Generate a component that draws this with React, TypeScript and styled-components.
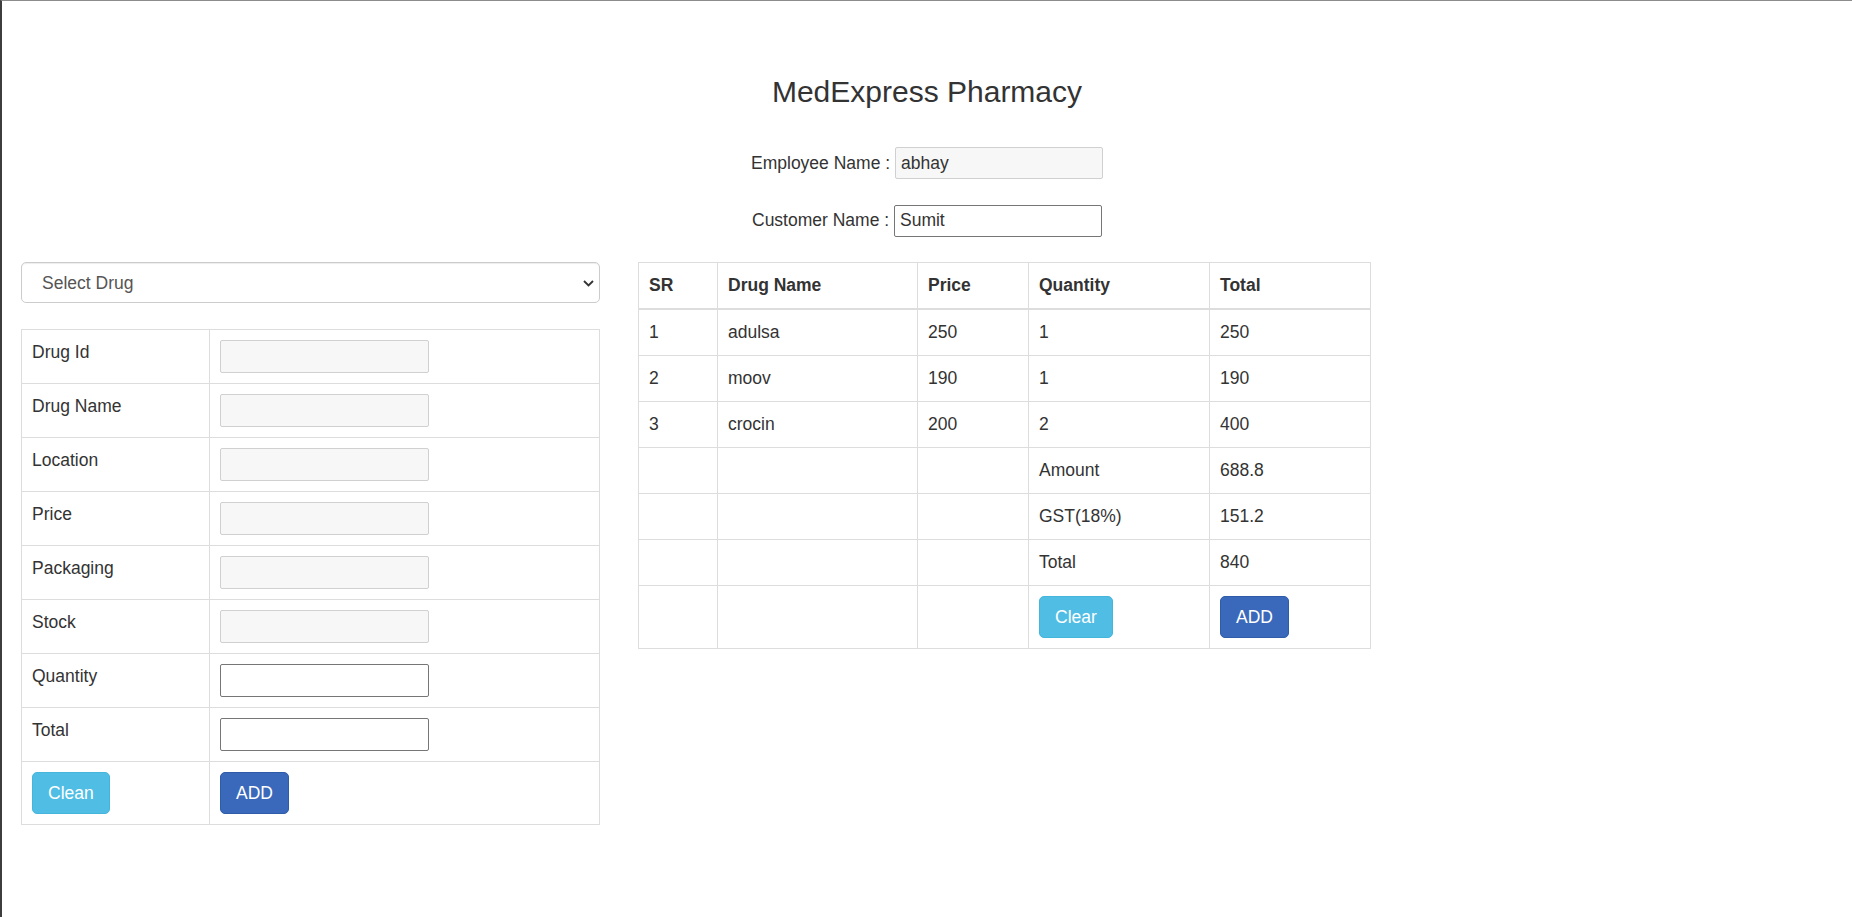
import * as React from "react";
import styled, { createGlobalStyle, css } from "styled-components";

const GlobalStyle = createGlobalStyle`
  html, body {
    margin: 0;
    padding: 0;
    background: #fff;
  }
  body {
    font-family: "Liberation Sans", Arial, Helvetica, sans-serif;
    font-size: 17.5px;
    line-height: 25px;
    color: #333;
  }
  * {
    box-sizing: border-box;
  }
`;

interface DrugField {
  label: string;
  readOnly: boolean;
}

interface CartItem {
  sr: number;
  name: string;
  price: number;
  qty: number;
}

const DRUG_FIELDS: DrugField[] = [
  { label: "Drug Id", readOnly: true },
  { label: "Drug Name", readOnly: true },
  { label: "Location", readOnly: true },
  { label: "Price", readOnly: true },
  { label: "Packaging", readOnly: true },
  { label: "Stock", readOnly: true },
  { label: "Quantity", readOnly: false },
  { label: "Total", readOnly: false },
];

const CART: CartItem[] = [
  { sr: 1, name: "adulsa", price: 250, qty: 1 },
  { sr: 2, name: "moov", price: 190, qty: 1 },
  { sr: 3, name: "crocin", price: 200, qty: 2 },
];

const SUMMARY = [
  { label: "Amount", value: "688.8" },
  { label: "GST(18%)", value: "151.2" },
  { label: "Total", value: "840" },
];

const CART_COLUMNS = [
  { title: "SR", width: 79 },
  { title: "Drug Name", width: 200 },
  { title: "Price", width: 111 },
  { title: "Quantity", width: 181 },
  { title: "Total", width: 161 },
];

const Frame = styled.div`
  min-height: 100vh;
  border-top: 1px solid #8c8c8c;
  border-left: 2px solid #3d3d3d;
  padding: 74px 19px 40px 19px;
`;

const Header = styled.header`
  display: flex;
  flex-direction: column;
  align-items: center;
`;

const Title = styled.h1`
  margin: 0 0 39px;
  font-size: 30px;
  line-height: 33px;
  font-weight: 500;
  color: #333;
`;

const FieldRow = styled.div`
  display: flex;
  align-items: center;
  height: 32px;
  margin-bottom: 25.5px;
  white-space: pre;
`;

const inputBase = css`
  height: 33px;
  padding: 0 5px;
  font-family: inherit;
  font-size: 17.5px;
  color: #333;
  border-radius: 2px;
  outline: none;
`;

const TextInput = styled.input<{ $locked?: boolean; $w?: number }>`
  ${inputBase}
  width: ${(p) => p.$w ?? 209}px;
  background: ${(p) => (p.$locked ? "#f7f7f7" : "#fff")};
  border: 1px solid ${(p) => (p.$locked ? "#d0d0d0" : "#767676")};
`;

const HeaderInput = styled(TextInput)`
  height: 32px;
`;

const Main = styled.main`
  display: flex;
  align-items: flex-start;
  gap: 38px;
`;

const LeftColumn = styled.section`
  width: 579px;
  flex: none;
`;

const SelectWrap = styled.div`
  position: relative;
  margin-bottom: 26px;
`;

const DrugSelect = styled.select`
  appearance: none;
  display: block;
  width: 100%;
  height: 41px;
  padding: 0 30px 0 20px;
  font-family: inherit;
  font-size: 17.5px;
  color: #555;
  background: #fff;
  border: 1px solid #ccc;
  border-radius: 5px;
  box-shadow: inset 0 1px 1px rgba(0, 0, 0, 0.075);
  outline: none;
`;

const Chevron = styled.svg`
  position: absolute;
  right: 6px;
  top: 18px;
  pointer-events: none;
`;

const Table = styled.table<{ $w?: number }>`
  width: ${(p) => (p.$w ? `${p.$w}px` : "100%")};
  border-collapse: collapse;
  table-layout: fixed;
  border: 1px solid #ddd;
  flex: none;
`;

const Th = styled.th<{ $w: number }>`
  width: ${(p) => p.$w}px;
  padding: 10px;
  text-align: left;
  vertical-align: bottom;
  font-weight: bold;
  border: 1px solid #ddd;
  border-bottom: 2px solid #ddd;
`;

const Td = styled.td<{ $w?: number }>`
  ${(p) => p.$w && `width: ${p.$w}px;`}
  padding: 10px;
  vertical-align: top;
  border: 1px solid #ddd;
  height: 25px;
`;

const Button = styled.button<{ $variant: "info" | "primary" }>`
  display: inline-block;
  padding: 7.5px 15px;
  font-family: inherit;
  font-size: 17.5px;
  line-height: 25px;
  color: #fff;
  border-radius: 5px;
  cursor: pointer;
  background: ${(p) => (p.$variant === "info" ? "#50bde4" : "#3a69bc")};
  border: 1px solid ${(p) => (p.$variant === "info" ? "#46b5dc" : "#2f5ca8")};
`;

const App: React.FC = () => {
  return (
    <>
      <GlobalStyle />
      <Frame>
        <Header>
          <Title>MedExpress Pharmacy</Title>
          <FieldRow>
            {"Employee Name : "}
            <HeaderInput $locked $w={208} value="abhay" readOnly />
          </FieldRow>
          <FieldRow>
            {"Customer Name : "}
            <HeaderInput $w={208} defaultValue="Sumit" />
          </FieldRow>
        </Header>

        <Main>
          <LeftColumn>
            <SelectWrap>
              <DrugSelect defaultValue="">
                <option value="">Select Drug</option>
                <option value="adulsa">adulsa</option>
                <option value="moov">moov</option>
                <option value="crocin">crocin</option>
              </DrugSelect>
              <Chevron width="11" height="7" viewBox="0 0 11 7">
                <polyline points="1,1 5.5,5.5 10,1" fill="none" stroke="#333" strokeWidth="1.8" />
              </Chevron>
            </SelectWrap>

            <Table>
              <tbody>
                {DRUG_FIELDS.map((f, i) => (
                  <tr key={f.label}>
                    <Td $w={i === 0 ? 188 : undefined}>{f.label}</Td>
                    <Td>
                      <TextInput $locked={f.readOnly} readOnly={f.readOnly} />
                    </Td>
                  </tr>
                ))}
                <tr>
                  <Td>
                    <Button $variant="info">Clean</Button>
                  </Td>
                  <Td>
                    <Button $variant="primary">ADD</Button>
                  </Td>
                </tr>
              </tbody>
            </Table>
          </LeftColumn>

          <Table $w={732}>
            <thead>
              <tr>
                {CART_COLUMNS.map((c) => (
                  <Th key={c.title} $w={c.width}>
                    {c.title}
                  </Th>
                ))}
              </tr>
            </thead>
            <tbody>
              {CART.map((item) => (
                <tr key={item.sr}>
                  <Td>{item.sr}</Td>
                  <Td>{item.name}</Td>
                  <Td>{item.price}</Td>
                  <Td>{item.qty}</Td>
                  <Td>{item.price * item.qty}</Td>
                </tr>
              ))}
              {SUMMARY.map((s) => (
                <tr key={s.label}>
                  <Td />
                  <Td />
                  <Td />
                  <Td>{s.label}</Td>
                  <Td>{s.value}</Td>
                </tr>
              ))}
              <tr>
                <Td />
                <Td />
                <Td />
                <Td>
                  <Button $variant="info">Clear</Button>
                </Td>
                <Td>
                  <Button $variant="primary">ADD</Button>
                </Td>
              </tr>
            </tbody>
          </Table>
        </Main>
      </Frame>
    </>
  );
};

export default App;
